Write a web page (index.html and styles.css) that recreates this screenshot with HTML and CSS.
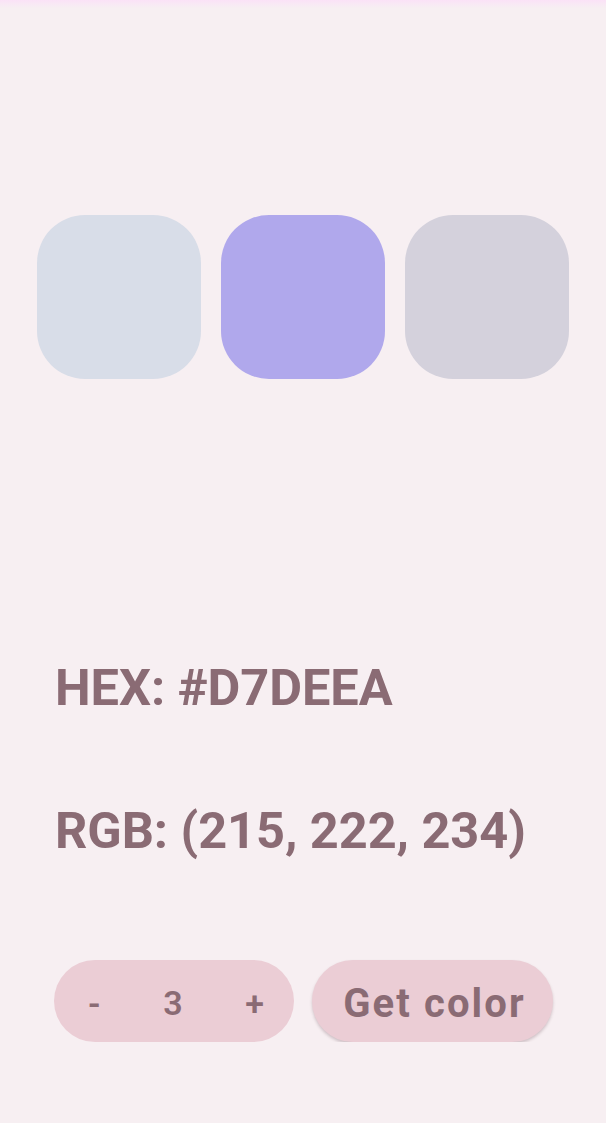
FILE: index.html
```html
<!DOCTYPE html>
<html lang="en">
<head>
<meta charset="utf-8">
<title>Color picker</title>
<link rel="stylesheet" href="styles.css">
</head>
<body>
<div class="status"></div>
<main class="screen">
  <div class="swatches">
    <div class="swatch swatch-a"></div>
    <div class="swatch swatch-b"></div>
    <div class="swatch swatch-c"></div>
  </div>
  <div class="info">
    <p class="line hex">HEX: #D7DEEA</p>
    <p class="line rgb">RGB: (215, 222, 234)</p>
  </div>
  <div class="controls">
    <div class="stepper">
      <span class="step">-</span>
      <span class="count">3</span>
      <span class="step">+</span>
    </div>
    <button class="get">Get color</button>
  </div>
</main>
</body>
</html>
```
FILE: styles.css
```css
html, body {
  margin: 0;
  padding: 0;
  background: #f7eff2;
  font-family: Roboto, "Liberation Sans", sans-serif;
  color: #8a6b74;
}
.status {
  height: 8px;
  background: linear-gradient(#fbe2f7, #f7eff2);
}
.screen {
  padding: 207px 0 0 0;
}
.swatches {
  display: flex;
  gap: 20px;
  padding: 0 37px;
}
.swatch {
  width: 164px;
  height: 164px;
  border-radius: 48px;
}
.swatch-a { background: #d8dde8; }
.swatch-b { background: #b0a8ec; }
.swatch-c { background: #d4d1dc; }
.info {
  padding: 0 0 0 55px;
  margin-top: 279px;
}
.line {
  margin: 0;
  font-size: 50.5px;
  line-height: 60px;
  font-weight: 700;
  letter-spacing: -0.05px;
}
.rgb {
  margin-top: 83px;
}
.controls {
  display: flex;
  gap: 18px;
  padding-left: 54px;
  margin-top: 99px;
}
.stepper {
  width: 240px;
  height: 82px;
  border-radius: 41px;
  background: #ebcdd5;
  display: flex;
  align-items: center;
  justify-content: space-between;
  box-sizing: border-box;
  padding: 4px 30px 0 34px;
  font-size: 34px;
  font-weight: 600;
}
.step, .count {
  display: block;
}
.get {
  width: 241px;
  height: 82px;
  border: none;
  border-radius: 41px;
  background: #ebcdd5;
  box-shadow: 0 2px 3px rgba(90, 60, 70, 0.25);
  font-family: Roboto, "Liberation Sans", sans-serif;
  font-size: 40px;
  font-weight: 700;
  letter-spacing: 2.1px;
  color: #8a6b74;
  padding: 4px 0 0 4px;
}
```
